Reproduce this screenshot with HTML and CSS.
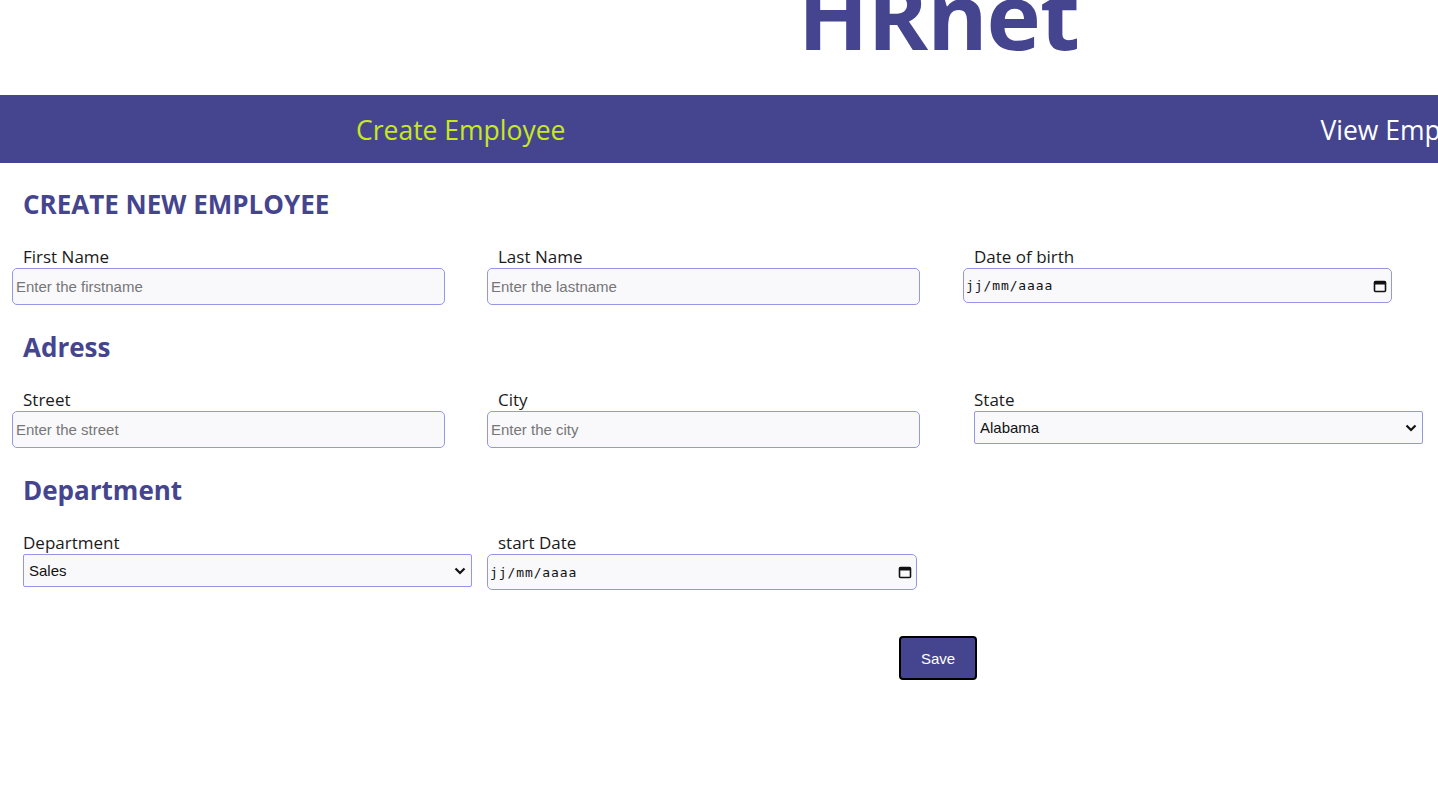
FILE: index.html
```html
<!DOCTYPE html>
<html lang="fr">
<head>
    <meta charset="UTF-8">
    <meta name="viewport" content="width=device-width, initial-scale=1.0">
    <title>HRnet - Create Employee</title>
    <link rel="stylesheet" href="styles.css">
</head>
<body>
    <header class="header">
        <h1 class="logo">HRnet</h1>
    </header>
    <nav class="nav">
        <a href="#" class="nav-link active">Create Employee</a>
        <a href="#" class="nav-link">View Employees</a>
    </nav>
    <main class="page">
        <form class="form">
            <h2 class="section-title upper">Create new employee</h2>
            <div class="row">
                <div class="field">
                    <label for="firstName">First Name</label>
                    <input type="text" id="firstName" class="input" placeholder="Enter the firstname">
                </div>
                <div class="field">
                    <label for="lastName">Last Name</label>
                    <input type="text" id="lastName" class="input" placeholder="Enter the lastname">
                </div>
                <div class="field">
                    <label for="birth">Date of birth</label>
                    <div class="date-box">
                        <input type="text" id="birth" class="date-input" placeholder="jj/mm/aaaa">
                        <svg class="cal-icon" width="14" height="14" viewBox="0 0 14 14"><rect x="1.5" y="2.5" width="11" height="10" rx="1" fill="none" stroke="#111" stroke-width="1.6"/><rect x="1.5" y="2.5" width="11" height="3" fill="#111"/></svg>
                    </div>
                </div>
            </div>

            <h2 class="section-title">Adress</h2>
            <div class="row">
                <div class="field">
                    <label for="street">Street</label>
                    <input type="text" id="street" class="input" placeholder="Enter the street">
                </div>
                <div class="field">
                    <label for="city">City</label>
                    <input type="text" id="city" class="input" placeholder="Enter the city">
                </div>
                <div class="field">
                    <label for="state">State</label>
                    <div class="select-box">
                        <select id="state" class="select">
                            <option>Alabama</option>
                            <option>Alaska</option>
                            <option>Arizona</option>
                        </select>
                        <svg class="chevron" width="12" height="8" viewBox="0 0 12 8"><path d="M1.5 1.5 6 6l4.5-4.5" fill="none" stroke="#111" stroke-width="2.2"/></svg>
                    </div>
                </div>
            </div>

            <h2 class="section-title">Department</h2>
            <div class="row">
                <div class="field">
                    <label for="department">Department</label>
                    <div class="select-box">
                        <select id="department" class="select">
                            <option>Sales</option>
                            <option>Marketing</option>
                            <option>Engineering</option>
                            <option>Human Resources</option>
                            <option>Legal</option>
                        </select>
                        <svg class="chevron" width="12" height="8" viewBox="0 0 12 8"><path d="M1.5 1.5 6 6l4.5-4.5" fill="none" stroke="#111" stroke-width="2.2"/></svg>
                    </div>
                </div>
                <div class="field">
                    <label for="startDate">start Date</label>
                    <div class="date-box short">
                        <input type="text" id="startDate" class="date-input" placeholder="jj/mm/aaaa">
                        <svg class="cal-icon" width="14" height="14" viewBox="0 0 14 14"><rect x="1.5" y="2.5" width="11" height="10" rx="1" fill="none" stroke="#111" stroke-width="1.6"/><rect x="1.5" y="2.5" width="11" height="3" fill="#111"/></svg>
                    </div>
                </div>
            </div>

            <div class="actions">
                <button type="button" class="save-btn">Save</button>
            </div>
        </form>
    </main>
</body>
</html>
```

FILE: styles.css
```css
body {
    margin: 0;
    padding: 0;
    background-color: #fff;
    font-family: "Open Sans", "Noto Sans", sans-serif;
    color: #1a1a1a;
    overflow: hidden;
}
.header {
    height: 95px;
    overflow: hidden;
    padding-left: 798px;
}
.logo {
    margin: -31px 0 0;
    font-size: 92px;
    line-height: 1;
    font-weight: 700;
    color: rgb(69, 69, 143);
    letter-spacing: -1px;
}
.nav {
    height: 68px;
    background-color: rgb(69, 69, 143);
    display: flex;
    align-items: center;
    white-space: nowrap;
    overflow: hidden;
    padding-left: 356px;
    gap: 755px;
}
.nav-link {
    color: #fff;
    text-decoration: none;
    font-size: 26.5px;
    padding-top: 2px;
}
.nav-link.active {
    color: rgb(200, 232, 32);
}
.page {
    padding: 0 12px;
}
.section-title {
    margin: 0 0 24px;
    padding-left: 11px;
    color: rgb(69, 69, 143);
    font-size: 26px;
    font-weight: 700;
}
.section-title.upper {
    text-transform: uppercase;
    padding-top: 23px;
}
.row {
    display: grid;
    grid-template-columns: 433px 434px 460px;
    column-gap: 42px;
    margin-bottom: 24px;
}
.field {
    display: flex;
    flex-direction: column;
}
.field label {
    padding-left: 11px;
    font-size: 17px;
    line-height: 22px;
}
.input {
    box-sizing: border-box;
    width: 433px;
    height: 37px;
    border: 1px solid rgb(150, 150, 230);
    border-radius: 5px;
    background-color: rgb(249, 249, 252);
    padding: 0 3px;
    font-family: "Liberation Sans", Arial, sans-serif;
    font-size: 15px;
    color: #222;
}
.input::placeholder {
    color: #767676;
}
.date-box {
    box-sizing: border-box;
    width: 429px;
    height: 35px;
    display: flex;
    align-items: center;
    border: 1px solid rgb(150, 150, 230);
    border-radius: 5px;
    background-color: rgb(249, 249, 252);
    padding: 0 4px 0 2px;
}
.date-box.short {
    width: 430px;
    height: 36px;
}
.date-input {
    flex: 1;
    border: none;
    background: none;
    padding: 0;
    outline: none;
    font-family: "DejaVu Sans Mono", "Liberation Mono", monospace;
    font-size: 13px;
    letter-spacing: 0.9px;
    color: #111;
}
.date-input::placeholder {
    color: #111;
}
.cal-icon {
    flex-shrink: 0;
}
.select-box {
    position: relative;
    margin-left: 11px;
    width: 449px;
}
.select {
    box-sizing: border-box;
    width: 100%;
    height: 33px;
    appearance: none;
    border: 1px solid rgb(150, 150, 230);
    border-radius: 2px;
    background-color: rgb(249, 249, 252);
    padding: 0 5px;
    font-family: "Liberation Sans", Arial, sans-serif;
    font-size: 15px;
    color: #111;
}
.chevron {
    position: absolute;
    right: 6px;
    top: 13px;
    pointer-events: none;
}
.actions {
    display: flex;
    padding: 22px 0 0 887px;
}
.save-btn {
    width: 78px;
    height: 44px;
    border: 2px solid #000;
    border-radius: 4px;
    background-color: rgb(69, 69, 143);
    color: #fff;
    font-family: "Liberation Sans", Arial, sans-serif;
    font-size: 15px;
    cursor: pointer;
}
```
